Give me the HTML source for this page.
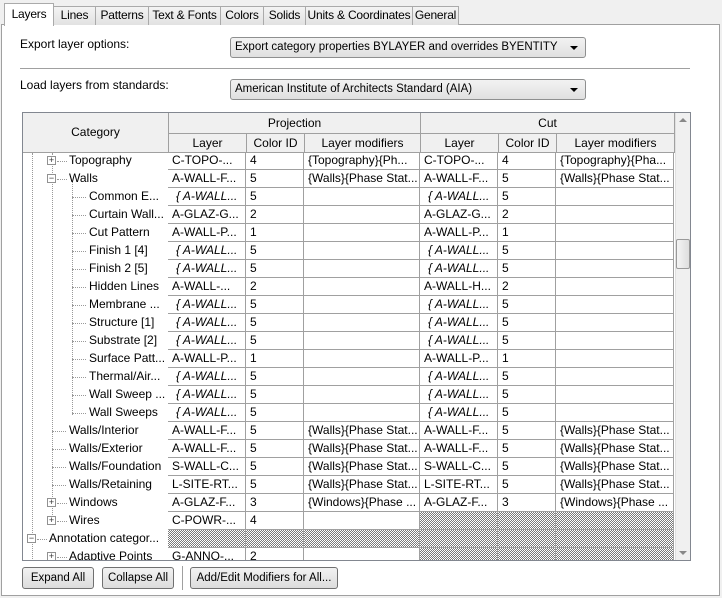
<!DOCTYPE html>
<html><head><style>
*{box-sizing:border-box;margin:0;padding:0}
body{width:722px;height:598px;background:#f0f0f0;font-family:"Liberation Sans",sans-serif;font-size:12px;color:#000;position:relative;overflow:hidden}
.a{position:absolute}
.tab{position:absolute;top:6px;height:19px;border:1px solid #aaa;border-bottom:none;background:linear-gradient(#f4f4f4,#e2e2e2);text-align:center;line-height:17px;font-size:12px;white-space:nowrap;overflow:hidden;letter-spacing:-0.2px}
.panel{position:absolute;left:1px;top:24px;width:719px;height:572px;border:1px solid #a0a0a0;background:#fff}
.dd{position:absolute;left:230px;width:356px;height:21px;border:1px solid #8e8f8f;border-radius:3px;background:linear-gradient(#f2f2f2,#e0e0e0);padding-left:4px;line-height:19px;font-size:11.5px}
.dd:after{content:"";position:absolute;right:7px;top:8px;border-left:4px solid transparent;border-right:4px solid transparent;border-top:4px solid #000}
.tbl{position:absolute;left:22px;top:112px;width:669px;height:449px;border:1px solid #828790;overflow:hidden;background:#fff}
.h{position:absolute;background:#f0f0f0;border-right:1px solid #a0a0a0;border-bottom:1px solid #a0a0a0;text-align:center;font-size:12px}
.c{position:absolute;height:18px;border-right:1px solid #a0a0a0;border-bottom:1px solid #a0a0a0;line-height:17px;padding-left:4px;white-space:nowrap;overflow:hidden;font-size:12px}
.it{font-style:italic;padding-left:8px}
.hat{background:repeating-conic-gradient(#7a7a7a 0 25%,#fff 0 50%) 0 0/2px 2px}
.n{position:absolute;height:18px;line-height:17px;white-space:nowrap;font-size:12px}
.box{position:absolute;width:9px;height:9px;border:1px solid #919191;background:#fff;font-size:9px;line-height:7px;text-align:center;color:#333}
.dl{position:absolute;border-top:1px dotted #999;height:0}
.vl{position:absolute;border-left:1px dotted #999;width:0}
.btn{position:absolute;top:567px;height:22px;border:1px solid #707070;border-radius:3px;background:linear-gradient(#f2f2f2,#dcdcdc);text-align:center;line-height:20px;font-size:11.5px}
</style></head><body>
<div class="panel"></div>
<div class="tab" style="left:53px;width:43px">Lines</div>
<div class="tab" style="left:95px;width:54px">Patterns</div>
<div class="tab" style="left:148px;width:73px">Text &amp; Fonts</div>
<div class="tab" style="left:220px;width:44px">Colors</div>
<div class="tab" style="left:263px;width:43px">Solids</div>
<div class="tab" style="left:305px;width:108px">Units &amp; Coordinates</div>
<div class="tab" style="left:412px;width:47px">General</div>
<div class="tab" style="left:4px;top:3px;width:50px;height:23px;background:#fff;line-height:20px;z-index:2">Layers</div>

<div class="a" style="left:20px;top:37px">Export layer options:</div>
<div class="dd" style="top:37px">Export category properties BYLAYER and overrides BYENTITY</div>
<div class="a" style="left:20px;top:68px;width:670px;height:1px;background:#a0a0a0"></div>
<div class="a" style="left:20px;top:78px">Load layers from standards:</div>
<div class="dd" style="top:79px">American Institute of Architects Standard (AIA)</div>

<div class="tbl">
<div class="h" style="left:0;top:0;width:146px;height:40px;line-height:39px">Category</div>
<div class="h" style="left:146px;top:0;width:252px;height:21px;line-height:20px">Projection</div>
<div class="h" style="left:398px;top:0;width:254px;height:21px;line-height:20px">Cut</div>
<div class="h" style="left:146px;top:21px;width:78px;height:19px;line-height:18px">Layer</div>
<div class="h" style="left:224px;top:21px;width:58px;height:19px;line-height:18px">Color ID</div>
<div class="h" style="left:282px;top:21px;width:116px;height:19px;line-height:18px">Layer modifiers</div>
<div class="h" style="left:398px;top:21px;width:78px;height:19px;line-height:18px">Layer</div>
<div class="h" style="left:476px;top:21px;width:58px;height:19px;line-height:18px">Color ID</div>
<div class="h" style="left:534px;top:21px;width:118px;height:19px;line-height:18px">Layer modifiers</div>
<div class="a" style="left:652px;top:0;width:16px;height:448px;background:#f0f0f0;border-left:1px solid #e0e0e0"></div>
<div class="a" style="left:656px;top:5px;border-left:4px solid transparent;border-right:4px solid transparent;border-bottom:4px solid #888;width:0"></div>
<div class="a" style="left:656px;top:438px;border-left:4px solid transparent;border-right:4px solid transparent;border-top:4px solid #888;width:0"></div>
<div class="a" style="left:653px;top:126px;width:14px;height:30px;border:1px solid #999;border-radius:2px;background:linear-gradient(90deg,#f4f4f4,#dedede)"></div>
<div class="vl" style="left:9px;top:40px;height:410px"></div>
<div class="vl" style="left:29px;top:40px;height:370px"></div>
<div class="vl" style="left:49px;top:68px;height:234px"></div>
</div>

<div class="btn" style="left:22px;width:72px">Expand All</div>
<div class="btn" style="left:102px;width:72px">Collapse All</div>
<div class="a" style="left:182px;top:566px;width:1px;height:24px;background:#a0a0a0"></div>
<div class="btn" style="left:190px;width:148px">Add/Edit Modifiers for All...</div>

<div class="a" style="left:23px;top:114px;width:651px;height:446px;overflow:hidden">
<div style="position:absolute;left:0;top:-1px;width:651px;height:460px">
<div class="box" style="left:24px;top:43px">+</div><div class="dl" style="left:34px;top:48px;width:10px"></div><div class="n" style="left:46px;top:39px">Topography</div>
<div class="c" style="left:145px;top:39px;width:78px">C-TOPO-...</div><div class="c" style="left:223px;top:39px;width:58px">4</div><div class="c" style="left:281px;top:39px;width:116px">{Topography}{Ph...</div><div class="c" style="left:397px;top:39px;width:78px">C-TOPO-...</div><div class="c" style="left:475px;top:39px;width:58px">4</div><div class="c" style="left:533px;top:39px;width:118px">{Topography}{Pha...</div>
<div class="box" style="left:24px;top:61px">−</div><div class="dl" style="left:34px;top:66px;width:10px"></div><div class="n" style="left:46px;top:57px">Walls</div>
<div class="c" style="left:145px;top:57px;width:78px">A-WALL-F...</div><div class="c" style="left:223px;top:57px;width:58px">5</div><div class="c" style="left:281px;top:57px;width:116px">{Walls}{Phase Stat...</div><div class="c" style="left:397px;top:57px;width:78px">A-WALL-F...</div><div class="c" style="left:475px;top:57px;width:58px">5</div><div class="c" style="left:533px;top:57px;width:118px">{Walls}{Phase Stat...</div>
<div class="dl" style="left:49px;top:84px;width:14px"></div><div class="n" style="left:66px;top:75px">Common E...</div>
<div class="c it" style="left:145px;top:75px;width:78px">{ A-WALL...</div><div class="c" style="left:223px;top:75px;width:58px">5</div><div class="c" style="left:281px;top:75px;width:116px"></div><div class="c it" style="left:397px;top:75px;width:78px">{ A-WALL...</div><div class="c" style="left:475px;top:75px;width:58px">5</div><div class="c" style="left:533px;top:75px;width:118px"></div>
<div class="dl" style="left:49px;top:102px;width:14px"></div><div class="n" style="left:66px;top:93px">Curtain Wall...</div>
<div class="c" style="left:145px;top:93px;width:78px">A-GLAZ-G...</div><div class="c" style="left:223px;top:93px;width:58px">2</div><div class="c" style="left:281px;top:93px;width:116px"></div><div class="c" style="left:397px;top:93px;width:78px">A-GLAZ-G...</div><div class="c" style="left:475px;top:93px;width:58px">2</div><div class="c" style="left:533px;top:93px;width:118px"></div>
<div class="dl" style="left:49px;top:120px;width:14px"></div><div class="n" style="left:66px;top:111px">Cut Pattern</div>
<div class="c" style="left:145px;top:111px;width:78px">A-WALL-P...</div><div class="c" style="left:223px;top:111px;width:58px">1</div><div class="c" style="left:281px;top:111px;width:116px"></div><div class="c" style="left:397px;top:111px;width:78px">A-WALL-P...</div><div class="c" style="left:475px;top:111px;width:58px">1</div><div class="c" style="left:533px;top:111px;width:118px"></div>
<div class="dl" style="left:49px;top:138px;width:14px"></div><div class="n" style="left:66px;top:129px">Finish 1 [4]</div>
<div class="c it" style="left:145px;top:129px;width:78px">{ A-WALL...</div><div class="c" style="left:223px;top:129px;width:58px">5</div><div class="c" style="left:281px;top:129px;width:116px"></div><div class="c it" style="left:397px;top:129px;width:78px">{ A-WALL...</div><div class="c" style="left:475px;top:129px;width:58px">5</div><div class="c" style="left:533px;top:129px;width:118px"></div>
<div class="dl" style="left:49px;top:156px;width:14px"></div><div class="n" style="left:66px;top:147px">Finish 2 [5]</div>
<div class="c it" style="left:145px;top:147px;width:78px">{ A-WALL...</div><div class="c" style="left:223px;top:147px;width:58px">5</div><div class="c" style="left:281px;top:147px;width:116px"></div><div class="c it" style="left:397px;top:147px;width:78px">{ A-WALL...</div><div class="c" style="left:475px;top:147px;width:58px">5</div><div class="c" style="left:533px;top:147px;width:118px"></div>
<div class="dl" style="left:49px;top:174px;width:14px"></div><div class="n" style="left:66px;top:165px">Hidden Lines</div>
<div class="c" style="left:145px;top:165px;width:78px">A-WALL-...</div><div class="c" style="left:223px;top:165px;width:58px">2</div><div class="c" style="left:281px;top:165px;width:116px"></div><div class="c" style="left:397px;top:165px;width:78px">A-WALL-H...</div><div class="c" style="left:475px;top:165px;width:58px">2</div><div class="c" style="left:533px;top:165px;width:118px"></div>
<div class="dl" style="left:49px;top:192px;width:14px"></div><div class="n" style="left:66px;top:183px">Membrane ...</div>
<div class="c it" style="left:145px;top:183px;width:78px">{ A-WALL...</div><div class="c" style="left:223px;top:183px;width:58px">5</div><div class="c" style="left:281px;top:183px;width:116px"></div><div class="c it" style="left:397px;top:183px;width:78px">{ A-WALL...</div><div class="c" style="left:475px;top:183px;width:58px">5</div><div class="c" style="left:533px;top:183px;width:118px"></div>
<div class="dl" style="left:49px;top:210px;width:14px"></div><div class="n" style="left:66px;top:201px">Structure [1]</div>
<div class="c it" style="left:145px;top:201px;width:78px">{ A-WALL...</div><div class="c" style="left:223px;top:201px;width:58px">5</div><div class="c" style="left:281px;top:201px;width:116px"></div><div class="c it" style="left:397px;top:201px;width:78px">{ A-WALL...</div><div class="c" style="left:475px;top:201px;width:58px">5</div><div class="c" style="left:533px;top:201px;width:118px"></div>
<div class="dl" style="left:49px;top:228px;width:14px"></div><div class="n" style="left:66px;top:219px">Substrate [2]</div>
<div class="c it" style="left:145px;top:219px;width:78px">{ A-WALL...</div><div class="c" style="left:223px;top:219px;width:58px">5</div><div class="c" style="left:281px;top:219px;width:116px"></div><div class="c it" style="left:397px;top:219px;width:78px">{ A-WALL...</div><div class="c" style="left:475px;top:219px;width:58px">5</div><div class="c" style="left:533px;top:219px;width:118px"></div>
<div class="dl" style="left:49px;top:246px;width:14px"></div><div class="n" style="left:66px;top:237px">Surface Patt...</div>
<div class="c" style="left:145px;top:237px;width:78px">A-WALL-P...</div><div class="c" style="left:223px;top:237px;width:58px">1</div><div class="c" style="left:281px;top:237px;width:116px"></div><div class="c" style="left:397px;top:237px;width:78px">A-WALL-P...</div><div class="c" style="left:475px;top:237px;width:58px">1</div><div class="c" style="left:533px;top:237px;width:118px"></div>
<div class="dl" style="left:49px;top:264px;width:14px"></div><div class="n" style="left:66px;top:255px">Thermal/Air...</div>
<div class="c it" style="left:145px;top:255px;width:78px">{ A-WALL...</div><div class="c" style="left:223px;top:255px;width:58px">5</div><div class="c" style="left:281px;top:255px;width:116px"></div><div class="c it" style="left:397px;top:255px;width:78px">{ A-WALL...</div><div class="c" style="left:475px;top:255px;width:58px">5</div><div class="c" style="left:533px;top:255px;width:118px"></div>
<div class="dl" style="left:49px;top:282px;width:14px"></div><div class="n" style="left:66px;top:273px">Wall Sweep ...</div>
<div class="c it" style="left:145px;top:273px;width:78px">{ A-WALL...</div><div class="c" style="left:223px;top:273px;width:58px">5</div><div class="c" style="left:281px;top:273px;width:116px"></div><div class="c it" style="left:397px;top:273px;width:78px">{ A-WALL...</div><div class="c" style="left:475px;top:273px;width:58px">5</div><div class="c" style="left:533px;top:273px;width:118px"></div>
<div class="dl" style="left:49px;top:300px;width:14px"></div><div class="n" style="left:66px;top:291px">Wall Sweeps</div>
<div class="c it" style="left:145px;top:291px;width:78px">{ A-WALL...</div><div class="c" style="left:223px;top:291px;width:58px">5</div><div class="c" style="left:281px;top:291px;width:116px"></div><div class="c it" style="left:397px;top:291px;width:78px">{ A-WALL...</div><div class="c" style="left:475px;top:291px;width:58px">5</div><div class="c" style="left:533px;top:291px;width:118px"></div>
<div class="dl" style="left:29px;top:318px;width:14px"></div><div class="n" style="left:46px;top:309px">Walls/Interior</div>
<div class="c" style="left:145px;top:309px;width:78px">A-WALL-F...</div><div class="c" style="left:223px;top:309px;width:58px">5</div><div class="c" style="left:281px;top:309px;width:116px">{Walls}{Phase Stat...</div><div class="c" style="left:397px;top:309px;width:78px">A-WALL-F...</div><div class="c" style="left:475px;top:309px;width:58px">5</div><div class="c" style="left:533px;top:309px;width:118px">{Walls}{Phase Stat...</div>
<div class="dl" style="left:29px;top:336px;width:14px"></div><div class="n" style="left:46px;top:327px">Walls/Exterior</div>
<div class="c" style="left:145px;top:327px;width:78px">A-WALL-F...</div><div class="c" style="left:223px;top:327px;width:58px">5</div><div class="c" style="left:281px;top:327px;width:116px">{Walls}{Phase Stat...</div><div class="c" style="left:397px;top:327px;width:78px">A-WALL-F...</div><div class="c" style="left:475px;top:327px;width:58px">5</div><div class="c" style="left:533px;top:327px;width:118px">{Walls}{Phase Stat...</div>
<div class="dl" style="left:29px;top:354px;width:14px"></div><div class="n" style="left:46px;top:345px">Walls/Foundation</div>
<div class="c" style="left:145px;top:345px;width:78px">S-WALL-C...</div><div class="c" style="left:223px;top:345px;width:58px">5</div><div class="c" style="left:281px;top:345px;width:116px">{Walls}{Phase Stat...</div><div class="c" style="left:397px;top:345px;width:78px">S-WALL-C...</div><div class="c" style="left:475px;top:345px;width:58px">5</div><div class="c" style="left:533px;top:345px;width:118px">{Walls}{Phase Stat...</div>
<div class="dl" style="left:29px;top:372px;width:14px"></div><div class="n" style="left:46px;top:363px">Walls/Retaining</div>
<div class="c" style="left:145px;top:363px;width:78px">L-SITE-RT...</div><div class="c" style="left:223px;top:363px;width:58px">5</div><div class="c" style="left:281px;top:363px;width:116px">{Walls}{Phase Stat...</div><div class="c" style="left:397px;top:363px;width:78px">L-SITE-RT...</div><div class="c" style="left:475px;top:363px;width:58px">5</div><div class="c" style="left:533px;top:363px;width:118px">{Walls}{Phase Stat...</div>
<div class="box" style="left:24px;top:385px">+</div><div class="dl" style="left:34px;top:390px;width:10px"></div><div class="n" style="left:46px;top:381px">Windows</div>
<div class="c" style="left:145px;top:381px;width:78px">A-GLAZ-F...</div><div class="c" style="left:223px;top:381px;width:58px">3</div><div class="c" style="left:281px;top:381px;width:116px">{Windows}{Phase ...</div><div class="c" style="left:397px;top:381px;width:78px">A-GLAZ-F...</div><div class="c" style="left:475px;top:381px;width:58px">3</div><div class="c" style="left:533px;top:381px;width:118px">{Windows}{Phase ...</div>
<div class="box" style="left:24px;top:403px">+</div><div class="dl" style="left:34px;top:408px;width:10px"></div><div class="n" style="left:46px;top:399px">Wires</div>
<div class="c" style="left:145px;top:399px;width:78px">C-POWR-...</div><div class="c" style="left:223px;top:399px;width:58px">4</div><div class="c" style="left:281px;top:399px;width:116px"></div><div class="c hat" style="left:397px;top:399px;width:78px"></div><div class="c hat" style="left:475px;top:399px;width:58px"></div><div class="c hat" style="left:533px;top:399px;width:118px"></div>
<div class="box" style="left:4px;top:421px">−</div><div class="dl" style="left:14px;top:426px;width:10px"></div><div class="n" style="left:26px;top:417px">Annotation categor...</div>
<div class="c hat" style="left:145px;top:417px;width:78px"></div><div class="c hat" style="left:223px;top:417px;width:58px"></div><div class="c hat" style="left:281px;top:417px;width:116px"></div><div class="c hat" style="left:397px;top:417px;width:78px"></div><div class="c hat" style="left:475px;top:417px;width:58px"></div><div class="c hat" style="left:533px;top:417px;width:118px"></div>
<div class="box" style="left:24px;top:439px">+</div><div class="dl" style="left:34px;top:444px;width:10px"></div><div class="n" style="left:46px;top:435px">Adaptive Points</div>
<div class="c" style="left:145px;top:435px;width:78px">G-ANNO-...</div><div class="c" style="left:223px;top:435px;width:58px">2</div><div class="c" style="left:281px;top:435px;width:116px"></div><div class="c hat" style="left:397px;top:435px;width:78px"></div><div class="c hat" style="left:475px;top:435px;width:58px"></div><div class="c hat" style="left:533px;top:435px;width:118px"></div>
</div>
</div>
</body></html>
